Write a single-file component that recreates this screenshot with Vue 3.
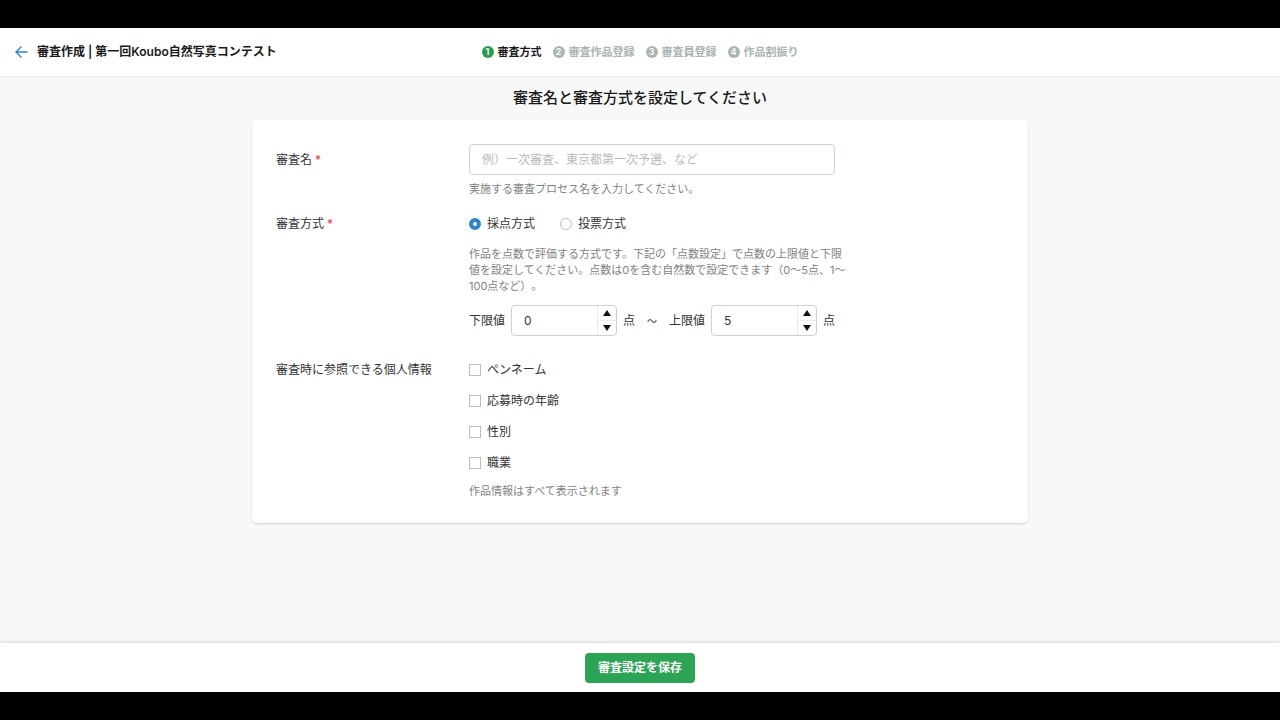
<script setup>
import { ref } from 'vue'

const steps = ['審査方式', '審査作品登録', '審査員登録', '作品割振り']
const current = ref(0)
const name = ref('')
const method = ref('score')
const methods = [
  { value: 'score', label: '採点方式' },
  { value: 'vote', label: '投票方式' },
]
const limits = ref([
  { id: 'lower', label: '下限値', value: 0 },
  { id: 'upper', label: '上限値', value: 5 },
])
const personal = ['ペンネーム', '応募時の年齢', '性別', '職業']
const shared = ref([])

function step(limit, amount) {
  limit.value = Math.max(0, Number(limit.value) + amount)
}
</script>

<template>
  <div class="screen">
    <header class="header">
      <div class="heading">
        <a class="back" href="#" aria-label="戻る">
          <svg width="14" height="14" viewBox="0 0 14 14" fill="none" stroke="currentColor" stroke-width="1.4">
            <path d="M12.5 7H1.5M6.5 1.5L1 7L6.5 12.5" />
          </svg>
        </a>
        <span class="contest">審査作成 | 第一回Koubo自然写真コンテスト</span>
      </div>
      <ol class="steps">
        <li v-for="(s, i) in steps" :key="s" class="step" :class="{ active: i === current }">
          <span class="badge">{{ i + 1 }}</span>
          <span>{{ s }}</span>
        </li>
      </ol>
    </header>

    <main class="main">
      <h1 class="title">審査名と審査方式を設定してください</h1>
      <form id="judging" class="card" @submit.prevent>
        <div class="row">
          <label class="label" for="name">審査名<span class="required">*</span></label>
          <div class="field">
            <input id="name" v-model="name" class="text-input" type="text" placeholder="例）一次審査、東京都第一次予選、など" />
            <p class="hint">実施する審査プロセス名を入力してください。</p>
          </div>
        </div>

        <div class="row method-row" role="radiogroup" aria-labelledby="method-label">
          <span id="method-label" class="label">審査方式<span class="required">*</span></span>
          <div class="field">
            <div class="radios">
              <label v-for="m in methods" :key="m.value" class="choice">
                <input v-model="method" class="radio" type="radio" name="method" :value="m.value" />
                {{ m.label }}
              </label>
            </div>
            <p class="hint description">作品を点数で評価する方式です。下記の「点数設定」で点数の上限値と下限<br />値を設定してください。点数は0を含む自然数で設定できます（0〜5点、1〜<br />100点など）。</p>
            <div class="limits">
              <template v-for="(l, i) in limits" :key="l.id">
                <span v-if="i > 0" class="tilde">〜</span>
                <div class="limit">
                  <label :for="l.id">{{ l.label }}</label>
                  <div class="number">
                    <input :id="l.id" v-model="l.value" class="number-input" type="number" min="0" />
                    <div class="stepper">
                      <button type="button" aria-label="増やす" @click="step(l, 1)">
                        <svg width="8" height="6" viewBox="0 0 8 6"><path d="M4 0L8 6H0Z" fill="#111" /></svg>
                      </button>
                      <button type="button" aria-label="減らす" @click="step(l, -1)">
                        <svg width="8" height="6" viewBox="0 0 8 6"><path d="M0 0H8L4 6Z" fill="#111" /></svg>
                      </button>
                    </div>
                  </div>
                  <span>点</span>
                </div>
              </template>
            </div>
          </div>
        </div>

        <div class="row personal-row" role="group" aria-labelledby="personal-label">
          <span id="personal-label" class="label">審査時に参照できる個人情報</span>
          <div class="field">
            <div class="checks">
              <label v-for="p in personal" :key="p" class="choice">
                <input v-model="shared" class="checkbox" type="checkbox" :value="p" />
                {{ p }}
              </label>
            </div>
            <p class="hint note">作品情報はすべて表示されます</p>
          </div>
        </div>
      </form>
    </main>

    <footer class="footer">
      <button class="save" type="submit" form="judging">審査設定を保存</button>
    </footer>
  </div>
</template>

<style>
body {
  margin: 0;
  background: #000;
}
</style>

<style scoped>
.screen {
  box-sizing: border-box;
  min-height: 100vh;
  padding: 28px 0;
  display: flex;
  flex-direction: column;
  background: #000;
  color: #333;
  font-family: Inter, "Noto Sans CJK JP", sans-serif;
  font-size: 12px;
  line-height: 20px;
  text-spacing-trim: space-all;
}
input,
button {
  box-sizing: border-box;
  font: inherit;
  color: inherit;
  margin: 0;
}
.header {
  box-sizing: border-box;
  min-height: 49px;
  padding: 0 15px;
  display: grid;
  grid-template-columns: 1fr auto 1fr;
  align-items: center;
  background: #fff;
  border-bottom: 1px solid #eceeee;
}
.heading {
  display: flex;
  align-items: center;
  gap: 8px;
}
.back {
  display: flex;
  color: #3182ce;
}
.contest {
  color: #1a1a1a;
  font-weight: 600;
}
.steps {
  display: flex;
  gap: 11px;
  margin: 0;
  padding: 0;
  list-style: none;
  font-size: 11px;
  font-weight: 600;
  color: #a9b5b0;
}
.step {
  display: flex;
  align-items: center;
  gap: 4px;
}
.badge {
  width: 12px;
  height: 12px;
  border-radius: 50%;
  background: #a9b5b0;
  color: #fff;
  font-size: 9px;
  line-height: 12px;
  text-align: center;
}
.active {
  color: #1a1a1a;
}
.active .badge {
  background: #2a9d50;
}
.main {
  flex: 1;
  padding: 9px 24px 24px;
  background: #f7f9f8;
}
.title {
  margin: 0 0 10px;
  color: #1a1a1a;
  font-size: 15px;
  font-weight: 500;
  line-height: 24px;
  text-align: center;
}
.card {
  box-sizing: border-box;
  max-width: 776px;
  margin: 0 auto;
  padding: 24px;
  background: #fff;
  border-radius: 5px;
  box-shadow: 0 1px 2px rgba(0, 0, 0, 0.16);
}
.row {
  display: grid;
  grid-template-columns: 169px 1fr;
  column-gap: 24px;
}
.row:first-child .label {
  padding-top: 6px;
}
.method-row {
  margin-top: 17px;
}
.personal-row {
  margin-top: 24px;
}
.required {
  margin-left: 3px;
  color: #e53e3e;
}
.text-input {
  display: block;
  width: 100%;
  max-width: 366px;
  height: 31px;
  padding: 0 12px;
  border: 1px solid #cbd2d0;
  border-radius: 4px;
  background: #fff;
}
.text-input::placeholder {
  color: #b5bdba;
  opacity: 1;
}
.hint {
  margin: 6px 0 0;
  color: #7d8481;
  font-size: 11px;
  line-height: 16px;
}
.radios {
  display: flex;
  gap: 25px;
}
.choice {
  display: flex;
  align-items: center;
  gap: 6px;
}
.radio,
.checkbox {
  appearance: none;
  width: 12px;
  height: 12px;
  border: 1px solid #b9bfbd;
  background: #fff;
}
.radio {
  border-radius: 50%;
}
.radio:checked {
  border: 4px solid #3182ce;
}
.checkbox:checked {
  background: #3182ce;
}
.description {
  margin-top: 12px;
}
.limits {
  display: flex;
  align-items: center;
  gap: 12px;
  margin-top: 11px;
}
.limit {
  display: flex;
  align-items: center;
  gap: 6px;
}
.tilde {
  width: 10px;
  font-size: 10px;
}
.number {
  box-sizing: border-box;
  width: 106px;
  height: 31px;
  display: flex;
  border: 1px solid #cbd2d0;
  border-radius: 4px;
  background: #fff;
  overflow: hidden;
}
.number-input {
  flex: 1;
  min-width: 0;
  padding: 0 12px;
  border: 0;
  background: none;
  appearance: textfield;
}
.number-input::-webkit-inner-spin-button {
  appearance: none;
}
.stepper {
  width: 18px;
  display: flex;
  flex-direction: column;
  border-left: 1px solid #e8ecea;
}
.stepper button {
  flex: 1;
  display: flex;
  align-items: center;
  justify-content: center;
  padding: 0;
  border: 0;
  background: none;
}
.stepper button + button {
  border-top: 1px solid #e8ecea;
}
.checks {
  display: grid;
  gap: 11px;
}
.note {
  margin-top: 10px;
}
.footer {
  position: relative;
  box-sizing: border-box;
  min-height: 49px;
  display: flex;
  align-items: center;
  justify-content: center;
  background: #fff;
  box-shadow: 0 0 4px rgba(0, 0, 0, 0.2);
  clip-path: inset(-6px 0 0 0);
}
.save {
  min-height: 30px;
  padding: 0 13px;
  border: 0;
  border-radius: 4px;
  background: #2da455;
  color: #fff;
  font-weight: 600;
}
</style>
